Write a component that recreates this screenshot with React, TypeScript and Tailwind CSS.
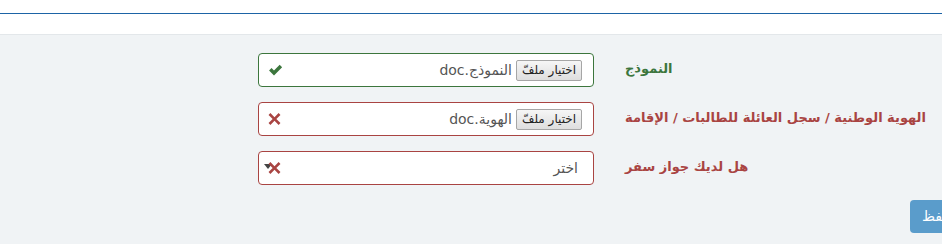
import React from 'react';

const CheckIcon = () => (
  <svg width="15" height="13" viewBox="0 0 14 12" className="block">
    <path d="M1 6.5 L3.3 4.2 L5.6 6.5 L10.9 1.2 L13.2 3.5 L5.6 11.1 Z" fill="#3c763d" />
  </svg>
);

const TimesIcon = () => (
  <svg width="13" height="13" viewBox="0 0 12 12" className="block">
    <path
      d="M2.2 0.5 L6 4.3 L9.8 0.5 L11.5 2.2 L7.7 6 L11.5 9.8 L9.8 11.5 L6 7.7 L2.2 11.5 L0.5 9.8 L4.3 6 L0.5 2.2 Z"
      fill="#a94442"
    />
  </svg>
);

const FileButton = () => (
  <span className="inline-flex h-[21px] w-[66px] items-center justify-center rounded-[2px] border border-[#a6a6a6] bg-gradient-to-b from-[#f6f6f6] to-[#dedede] text-[12px] text-[#222]">
    اختيار ملفّ
  </span>
);

type RowProps = {
  label: string;
  ok: boolean;
  children: React.ReactNode;
};

const Row = ({ label, ok, children }: RowProps) => (
  <div className="flex items-center" dir="rtl">
    <div className="w-[333px] pb-[5px] pl-4 text-left">
      <span className={`text-[13px] font-bold ${ok ? 'text-[#3c763d]' : 'text-[#a94442]'}`}>{label}</span>
    </div>
    <div className="w-[366px] px-[15px]">
      <div
        className={`relative flex h-[34px] items-center rounded-[4px] border bg-white ${
          ok ? 'border-[#3c763d]' : 'border-[#a94442]'
        }`}
      >
        {children}
        <span className="absolute left-[9px] top-1/2 -translate-y-1/2">{ok ? <CheckIcon /> : <TimesIcon />}</span>
      </div>
    </div>
  </div>
);

export default function App() {
  return (
    <div className="h-[244px] w-[942px] overflow-hidden bg-white" style={{ fontFamily: '"DejaVu Sans", "Noto Sans", sans-serif' }}>
      <div className="h-[13px]" />
      <div className="h-px bg-[#1d64a6]" />
      <div className="h-[20px]" />
      <div className="h-[210px] border-t border-[#e3e7ea] bg-[#f0f3f5]">
        <div className="flex flex-col gap-[15px] pt-[18px]">
          <Row label="النموذج" ok>
            <div className="flex items-center gap-[4px] pr-[11px]">
              <FileButton />
              <span className="text-[14px] text-[#555]">النموذج.doc</span>
            </div>
          </Row>
          <Row label="الهوية الوطنية / سجل العائلة للطالبات / الإقامة" ok={false}>
            <div className="flex items-center gap-[4px] pr-[11px]">
              <FileButton />
              <span className="text-[14px] text-[#555]">الهوية.doc</span>
            </div>
          </Row>
          <Row label="هل لديك جواز سفر" ok={false}>
            <div className="flex w-full items-center pr-[15px]">
              <span className="text-[14px] text-[#555]">اختر</span>
              <span className="absolute left-[5px] top-[12px] z-0 h-0 w-0 border-x-[4px] border-t-[5px] border-x-transparent border-t-[#444]" />
            </div>
          </Row>
        </div>
        <div className="mt-[15px] flex pl-[910px]">
          <div className="flex h-[33px] w-[60px] shrink-0 items-center whitespace-nowrap rounded-[4px] bg-[#5a9ccb] pl-[12px] text-[14px] text-white">
            <span dir="rtl">حفظ</span>
          </div>
        </div>
      </div>
    </div>
  );
}
